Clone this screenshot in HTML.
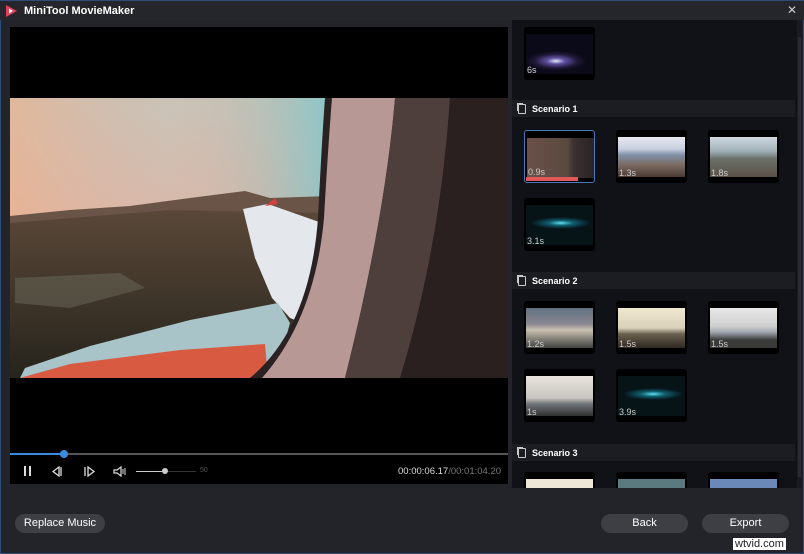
<!DOCTYPE html>
<html><head><meta charset="utf-8"><style>
*{margin:0;padding:0;box-sizing:border-box}
body{width:804px;height:554px;background:#232429;font-family:"Liberation Sans",sans-serif;position:relative;overflow:hidden}
.abs{position:absolute}
.title{left:0;top:0;width:804px;height:20px;background:#25262b;border-top:1px solid #2d4d78}
.title span{position:absolute;left:24px;top:4px;color:#fff;font-size:11px;font-weight:bold}
.vid{left:10px;top:27px;width:498px;height:457px;background:#000}
.rp{left:512px;top:20px;width:285px;height:468px;background:#111217;overflow:hidden}
.sb{left:797px;top:20px;width:5px;height:468px;background:#1a1b20}
.sb i{position:absolute;left:1px;top:17px;width:3px;height:440px;background:#2a2b30}
.hdr{position:absolute;left:0;width:283px;height:17px;background:#1c1d22;color:#fff;font-size:9px;font-weight:bold;padding:4px 0 0 20px}
.hdr:before{content:"";position:absolute;left:6px;top:4px;width:6px;height:8px;border:1px solid #ccc;border-radius:1px;box-shadow:-2px -2px 0 -1px #ccc}
.th{position:absolute;width:71px;height:53px;background:#000;border-radius:3px;overflow:hidden}
.th .im{position:absolute;left:2px;top:7px;width:67px;height:40px}
.th b{position:absolute;left:3px;bottom:5px;color:#ccc;font-size:9px;font-weight:normal}
.btn{position:absolute;height:19px;border-radius:10px;background:#3e3f45;color:#fff;font-size:11px;text-align:center;line-height:19px}
</style></head><body>
<div class="abs title">
<svg class="abs" style="left:4px;top:3px" width="14" height="14" viewBox="0 0 14 14"><path d="M2 1 L13 7 L2 13 Z" fill="#e0405a"/><path d="M5 4.5 L9 7 L5 9.5Z" fill="#fff"/></svg>
<span>MiniTool MovieMaker</span>
<span style="left:787px;top:2px;font-weight:normal;font-size:12px;color:#ccc">✕</span>
</div>
<div class="abs" style="left:0;top:20px;width:1px;height:534px;background:#2d4d78"></div>
<div class="abs" style="left:803px;top:20px;width:1px;height:534px;background:#2d4d78"></div>
<div class="abs" style="left:0;top:553px;width:804px;height:1px;background:#2d4d78"></div>
<div class="abs vid">
<svg class="abs" style="left:0;top:71px" width="498" height="280" viewBox="0 0 498 280">
<defs>
<linearGradient id="sky" x1="0" y1="0" x2="0" y2="1"><stop offset="0" stop-color="#c8c4b8"/><stop offset="0.6" stop-color="#e0b4a4"/><stop offset="1" stop-color="#d8a090"/></linearGradient>
<linearGradient id="sky2" x1="0" y1="0" x2="1" y2="0"><stop offset="0" stop-color="#f0b088" stop-opacity=".6"/><stop offset="0.5" stop-color="#e0b0a0" stop-opacity="0"/><stop offset="1" stop-color="#70c8d0" stop-opacity=".7"/></linearGradient>
<linearGradient id="gr" x1="0" y1="0" x2="0" y2="1"><stop offset="0" stop-color="#5a4838"/><stop offset="1" stop-color="#26241c"/></linearGradient>
</defs>
<rect width="498" height="280" fill="url(#sky)"/>
<rect width="320" height="120" fill="url(#sky2)"/>
<path d="M0 118 L60 112 L120 108 L180 100 L235 93 L260 100 L320 98 L320 280 L0 280Z" fill="#6a5448"/>
<path d="M0 125 L160 112 L320 115 L320 280 L0 280Z" fill="url(#gr)"/>
<path d="M5 180 L110 175 L135 190 L60 210 L5 205Z" fill="#6a6a5a" opacity=".5"/>
<path d="M233 111 L258 106 L312 125 L305 230 L280 220 L262 200 L245 160Z" fill="#e4e8ec"/>
<path d="M255 108 L265 100 L268 106Z" fill="#d04040"/>
<path d="M15 270 L80 248 L180 222 L268 205 L280 225 L265 280 L10 280Z" fill="#a8c4c8"/>
<path d="M10 280 L60 266 L170 252 L255 246 L258 280Z" fill="#d85a40"/>
<path d="M315 0 L498 0 L498 280 L240 280 Q300 230 308 120 Q312 40 315 0Z" fill="#2a2222"/>
<path d="M322 0 L385 0 Q375 120 335 280 L252 280 Q305 220 314 120 Q318 50 322 0Z" fill="#b89894"/>
<path d="M385 0 L440 0 Q430 150 390 280 L335 280 Q375 120 385 0Z" fill="#4e3e3c"/>
<path d="M440 0 L498 0 L498 280 L390 280 Q430 150 440 0Z" fill="#2a2020"/>
</svg>
<div class="abs" style="left:0;top:426px;width:498px;height:2px;background:#555"></div>
<div class="abs" style="left:0;top:426px;width:54px;height:2px;background:#3a8ae0"></div>
<div class="abs" style="left:50px;top:423px;width:8px;height:8px;border-radius:50%;background:#3a8ae0"></div>
<div class="abs" style="left:14px;top:439px;width:2px;height:10px;background:#ddd"></div>
<div class="abs" style="left:19px;top:439px;width:2px;height:10px;background:#ddd"></div>
<svg class="abs" style="left:42px;top:439px" width="60" height="11"><path d="M7 1 L1 5.5 L7 10Z M9 1 V10" stroke="#ddd" fill="none" stroke-width="1.3"/><path d="M33 1 V10 M36 1 L42 5.5 L36 10Z" stroke="#ddd" fill="none" stroke-width="1.3"/></svg>
<svg class="abs" style="left:103px;top:439px" width="14" height="11"><path d="M1 4 H4 L8 1 V10 L4 7 H1Z" stroke="#ddd" fill="none" stroke-width="1.2"/><path d="M10 3 V8 M12 2 V9" stroke="#ddd" stroke-width="1"/></svg>
<div class="abs" style="left:126px;top:444px;width:30px;height:1px;background:#ccc"></div>
<div class="abs" style="left:156px;top:444px;width:30px;height:1px;background:#333"></div>
<div class="abs" style="left:152px;top:441px;width:6px;height:6px;border-radius:50%;background:#ccc"></div>
<div class="abs" style="left:190px;top:440px;color:#555;font-size:7px">50</div>
<div class="abs" style="left:388px;top:439px;font-size:9.5px;color:#ddd">00:00:06.17<span style="color:#777">/00:01:04.20</span></div>
</div>
<div class="abs rp">
<div class="th" style="left:12px;top:7px"><div class="im" style="background:radial-gradient(ellipse 30px 10px at 30px 27px,#e0e8ff,#6050a0 30%,#201838 70%,#0a0a18)"></div><b>6s</b></div>
<div class="hdr" style="top:80px">Scenario 1</div>
<div class="th" style="left:12px;top:110px;border:1px solid #4a78b8"><div class="im" style="background:linear-gradient(90deg,#6a5048 0,#5a4a40 60%,#3a3030 70%,#2a2424 100%)"></div><div class="abs" style="left:1px;bottom:1px;width:52px;height:4px;background:#e05858"></div><b>0.9s</b></div>
<div class="th" style="left:104px;top:110px"><div class="im" style="background:linear-gradient(#e8e8f0 0,#c8d0e0 30%,#8090a8 45%,#7a6a60 70%,#4a3a34)"></div><b>1.3s</b></div>
<div class="th" style="left:196px;top:110px"><div class="im" style="background:linear-gradient(#d0d8e0 0,#a0b0b8 35%,#6a7068 55%,#5a5048)"></div><b>1.8s</b></div>
<div class="th" style="left:12px;top:178px"><div class="im" style="background:radial-gradient(ellipse 30px 6px at 35px 18px,#60e0f0,#106070 40%,#0a2a34 80%,#061418)"></div><b>3.1s</b></div>
<div class="hdr" style="top:252px">Scenario 2</div>
<div class="th" style="left:12px;top:281px"><div class="im" style="background:linear-gradient(#607080,#8a8890 40%,#c8c0b0 55%,#404040)"></div><b>1.2s</b></div>
<div class="th" style="left:104px;top:281px"><div class="im" style="background:linear-gradient(#f0e8d0,#d8d0b8 50%,#6a6050 65%,#302820)"></div><b>1.5s</b></div>
<div class="th" style="left:196px;top:281px"><div class="im" style="background:linear-gradient(#e8e8e8,#d0d0d0 45%,#a0a8b0 60%,#3a3a38 80%)"></div><b>1.5s</b></div>
<div class="th" style="left:12px;top:349px"><div class="im" style="background:linear-gradient(#e8e4dc,#c8c4c0 55%,#707478 70%,#303030)"></div><b>1s</b></div>
<div class="th" style="left:104px;top:349px"><div class="im" style="background:radial-gradient(ellipse 30px 6px at 35px 18px,#60e0f0,#106070 40%,#0a2a34 80%,#061418)"></div><b>3.9s</b></div>
<div class="hdr" style="top:424px">Scenario 3</div>
<div class="th" style="left:12px;top:452px"><div class="im" style="background:#eee6d6"></div></div>
<div class="th" style="left:104px;top:452px"><div class="im" style="background:#5a7a80"></div></div>
<div class="th" style="left:196px;top:452px"><div class="im" style="background:#6a88b8"></div></div>
</div>
<div class="abs sb"><i></i></div>
<div class="btn" style="left:15px;top:514px;width:90px">Replace Music</div>
<div class="btn" style="left:601px;top:514px;width:87px">Back</div>
<div class="btn" style="left:702px;top:514px;width:87px">Export</div>
<div class="abs" style="left:733px;top:538px;font-size:11px;color:#222;background:#fff;padding:0 2px">wtvid.com</div>
</body></html>
